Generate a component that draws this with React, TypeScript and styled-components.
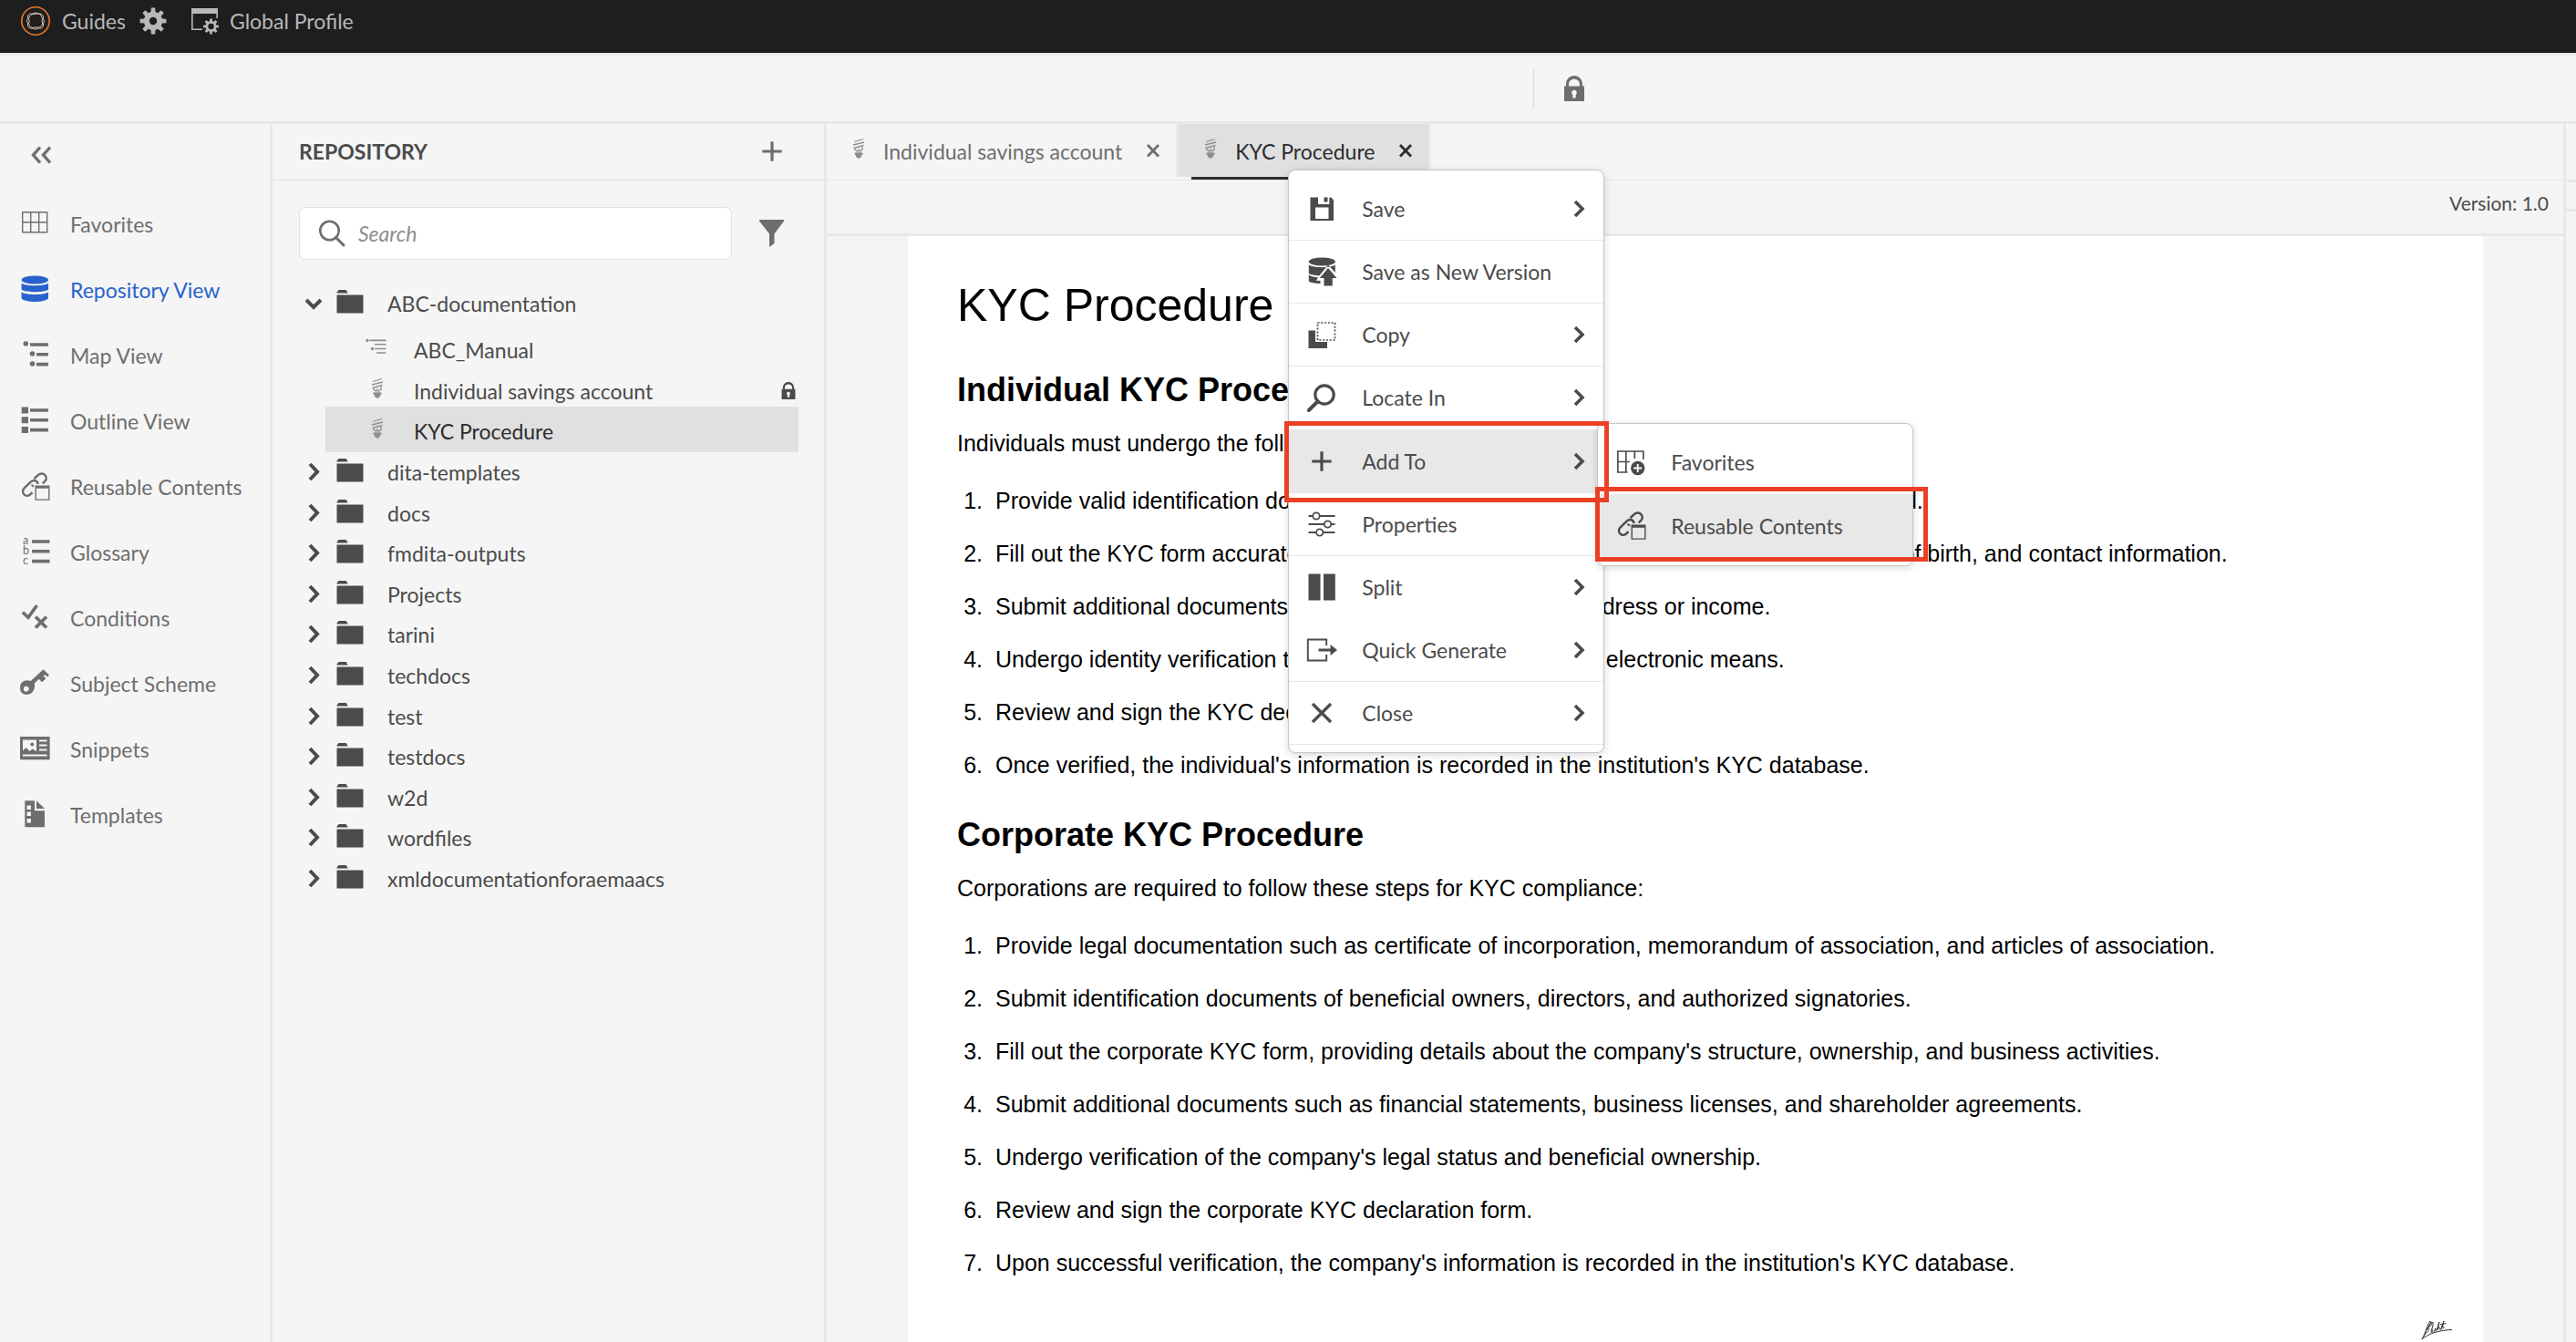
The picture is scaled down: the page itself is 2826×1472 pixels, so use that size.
import React from "react";
import styled, { createGlobalStyle, css } from "styled-components";

const line = "#e8e8e8";
const ink = "#4b4b4b";
const muted = "#6e6e6e";
const accent = "#2962cc";
const callout = "#eb4025";

const GlobalStyle = createGlobalStyle`
  *, *::before, *::after { box-sizing: border-box; }
  html, body, #root { height: 100%; }
  body {
    margin: 0;
    overflow: hidden;
    background: #f5f5f5;
    color: ${ink};
    font-family: Lato, "Open Sans", sans-serif;
    font-size: 23px;
    line-height: 30px;
  }
  button, input { font: inherit; color: inherit; }
  button { padding: 0; border: 0; background: none; text-align: left; cursor: pointer; }
  ul { margin: 0; padding: 0; list-style: none; }
  svg { display: block; flex: none; overflow: visible; }
`;

const Shell = styled.div`
  display: flex;
  flex-direction: column;
  height: 100vh;
`;

const Header = styled.header`
  display: flex;
  align-items: center;
  height: 58px;
  padding: 0 22px 12px;
  background: #1e1e1e;
  color: #b8b8b8;
`;

const Brand = styled.a`
  display: flex;
  align-items: center;
  gap: 12px;
  color: inherit;
  text-decoration: none;
`;

const HeaderButton = styled.button<{ $gap: number }>`
  display: flex;
  align-items: center;
  gap: 10px;
  margin-left: ${(p) => p.$gap}px;
`;

const Toolbar = styled.div`
  display: flex;
  align-items: center;
  height: 78px;
  border-top: 3px solid ${line};
  border-bottom: 3px solid ${line};
  background: #f5f5f5;
`;

const ToolbarMain = styled.div`
  flex: 0 0 59.5%;
`;

const ToolbarGroup = styled.div`
  display: flex;
  align-items: center;
  height: 44px;
  padding-left: 28px;
  border-left: 3px solid ${line};
  color: ${muted};
`;

const Workspace = styled.div`
  display: flex;
  flex: 1;
  min-height: 0;
`;

const Sidebar = styled.nav`
  display: flex;
  flex-direction: column;
  flex: none;
  width: 299px;
  border-right: 3px solid ${line};
  color: ${muted};
`;

const CollapseButton = styled.button`
  display: flex;
  align-items: center;
  height: 74px;
  padding: 4px 0 10px 32px;
`;

const NavItem = styled.a<{ $active?: boolean }>`
  display: flex;
  align-items: center;
  gap: 21px;
  height: 72px;
  padding-left: 20px;
  color: ${(p) => (p.$active ? accent : muted)};
  text-decoration: none;
  white-space: nowrap;
`;

const Panel = styled.section`
  flex: none;
  width: 608px;
  border-right: 3px solid ${line};
`;

const PanelHeader = styled.div`
  display: flex;
  align-items: center;
  justify-content: space-between;
  height: 62px;
  padding: 0 46px 2px 29px;
  border-bottom: 1px solid #e0e0e0;
`;

const PanelTitle = styled.h2`
  margin: 0;
  font-size: 23px;
  line-height: 30px;
  font-weight: 700;
`;

const IconButton = styled.button`
  color: ${muted};
`;

const SearchRow = styled.form`
  display: flex;
  align-items: center;
  gap: 30px;
  padding: 29px 44px 22px 29px;
`;

const SearchBox = styled.label`
  display: flex;
  align-items: center;
  flex: 1;
  height: 58px;
  padding: 0 20px;
  gap: 14px;
  border: 1px solid #e1e1e1;
  border-radius: 7px;
  background: #fff;
  color: ${muted};
`;

const SearchInput = styled.input`
  flex: 1;
  min-width: 0;
  padding: 0;
  border: 0;
  outline: 0;
  background: transparent;
  &::placeholder { color: #8e8e8e; font-style: italic; opacity: 1; }
`;

const folderRow = css`
  display: flex;
  align-items: center;
  width: 100%;
  padding-left: 32px;
`;

const OpenFolder = styled.button`
  ${folderRow}
  height: 51px;
`;

const FolderButton = styled.button`
  ${folderRow}
  height: 100%;
`;

const FolderIconWrap = styled.span`
  margin: 0 26px 0 12px;
`;

const Children = styled.ul`
  margin: 3px 28px 0 58px;
`;

const FileButton = styled.button<{ $selected?: boolean }>`
  display: flex;
  align-items: center;
  gap: 23px;
  width: 100%;
  height: 45px;
  padding: 0 3px 0 38px;
  ${(p) =>
    p.$selected &&
    css`
      height: 50px;
      margin-top: -5px;
      padding-top: 4px;
      background: #e0e0e0;
      color: #2c2c2c;
    `}
`;

const FileLock = styled.span`
  margin-left: auto;
`;

const FolderList = styled.ul`
  display: grid;
  grid-auto-rows: 1fr;
  height: 490px;
`;

const Editor = styled.main`
  display: flex;
  flex: 1;
  flex-direction: column;
  min-width: 0;
  background: #f4f4f4;
`;

const TabBar = styled.div`
  display: flex;
  height: 62px;
  border-bottom: 1px solid ${line};
  background: #f5f5f5;
`;

const TabSlot = styled.div<{ $active?: boolean }>`
  position: relative;
  display: flex;
  height: ${(p) => (p.$active ? 61 : 58)}px;
  border-right: 3px solid ${line};
  color: ${muted};
  ${(p) =>
    p.$active &&
    css`
      background: linear-gradient(#e0e0e0 58px, #f5f5f5 58px);
      border-right-color: #ebebeb;
      color: #2c2c2c;
      &::after {
        content: "";
        position: absolute;
        left: 14px;
        right: 10px;
        bottom: 0;
        height: 3px;
        background: #2c2c2c;
      }
    `}
`;

const Tab = styled.button`
  display: flex;
  align-items: center;
  height: 60px;
  gap: 8px;
  padding-left: 28px;
  white-space: nowrap;
`;

const TabClose = styled.button`
  height: 58px;
  padding: 0 17px 0 26px;
`;

const VersionBar = styled.div`
  height: 61px;
  flex: none;
  padding: 10px 16px 0;
  border-bottom: 3px solid ${line};
  color: ${ink};
  font-size: 21px;
  text-align: right;
`;

const Page = styled.article`
  flex: 1;
  min-height: 0;
  margin: 0 88px 0 89px;
  padding: 46px 54px 0;
  overflow: hidden;
  background: #fff;
  color: #000;
  font-family: "Liberation Sans", Arial, sans-serif;
  font-size: 25px;
  line-height: 30px;
`;

const PageTitle = styled.h1`
  margin: 0 0 41px;
  font-size: 50px;
  line-height: 60px;
  font-weight: 400;
`;

const SectionTitle = styled.h2`
  margin: 0 0 21px;
  font-size: 36px;
  line-height: 44px;
  font-weight: 700;
`;

const Intro = styled.p`
  margin: 0 0 19px;
`;

const Steps = styled.ol`
  margin: 0 0 26px;
  padding-left: 35px;
`;

const Step = styled.li`
  padding-left: 7px;
  line-height: 58px;
  white-space: nowrap;
`;

const Signature = styled.div`
  display: flex;
  justify-content: flex-end;
  margin-right: -22px;
  margin-top: 34px;
`;

const RightRail = styled.aside`
  flex: none;
  width: 14px;
  border-left: 3px solid ${line};
`;

const RailSlot = styled.div<{ $height: number }>`
  height: ${(p) => p.$height}px;
  border-bottom: 3px solid ${line};
`;

const MenuBox = styled.ul<{ $left: number; $top: number }>`
  position: absolute;
  left: ${(p) => p.$left}px;
  top: ${(p) => p.$top}px;
  z-index: 2;
  width: 347px;
  padding: 8px 0;
  border: 1px solid #c6c6c6;
  border-radius: 8px;
  background: #fff;
  box-shadow: 0 2px 8px rgba(0, 0, 0, 0.16);
  color: ${ink};
`;

const MenuRow = styled.li`
  position: relative;
`;

const MenuButton = styled.button<{ $rule?: boolean; $active?: boolean }>`
  display: flex;
  align-items: center;
  gap: 26px;
  width: 100%;
  height: ${(p) => (p.$active ? 70 : 69)}px;
  padding: 0 18px;
  border-bottom: 1px solid ${(p) => (p.$rule ? "#e6e6e6" : "transparent")};
  background: ${(p) => (p.$active ? "#e8e8e8" : "transparent")};
  white-space: nowrap;
`;

const MenuLabel = styled.span`
  flex: 1;
`;

const Callout = styled.span<{ $l: number; $t: number; $w: number; $h: number }>`
  position: absolute;
  z-index: 4;
  left: ${(p) => p.$l}px;
  top: ${(p) => p.$t}px;
  width: ${(p) => p.$w}px;
  height: ${(p) => p.$h}px;
  border: 5px solid ${callout};
  pointer-events: none;
`;

const Icon = ({ children, w = 36, h = 36 }: { children: React.ReactNode; w?: number; h?: number }) => (
  <svg width={w} height={h} viewBox={`0 0 ${w} ${h}`} fill="currentColor" aria-hidden="true">
    {children}
  </svg>
);

const gearPath = (cx: number, cy: number, outer: number, inner: number, hole: number) => {
  const pts: string[] = [];
  for (let i = 0; i < 8; i++) {
    const a = (i * Math.PI) / 4;
    const spec: [number, number][] = [
      [-0.24, inner],
      [-0.15, outer],
      [0.15, outer],
      [0.24, inner],
    ];
    spec.forEach(([d, r]) => pts.push(`${(cx + r * Math.sin(a + d)).toFixed(2)} ${(cy - r * Math.cos(a + d)).toFixed(2)}`));
  }
  return `M${pts.join("L")}ZM${cx - hole} ${cy}a${hole} ${hole} 0 1 0 ${hole * 2} 0a${hole} ${hole} 0 1 0 ${-hole * 2} 0Z`;
};

const Logo = () => (
  <Icon w={34} h={34}>
    <circle cx="17" cy="17" r="15.2" fill="none" stroke="#e87a2d" strokeWidth="1.6" />
    <g fill="none" stroke="#f3d9c4" strokeWidth="0.9">
      <path d="M17 8c2 0 2.500 1.500 4.500 1.200s4.500 1.800 4 4.300.9 2 .9 3.500-1.300 2-.9 4-1.500 4.500-4 4-2.500 1-4.500 1-2.500-1.300-4.500-1-4.500-1.500-4-4-.9-2-.9-4 1.300-2 .9-4 1.500-4.500 4-4 2.500-1 4.500-1Z" />
      <path d="M17 9.500c3-1.300 5.500-.5 6 1.500s2.500 3 1 6c1.500 3 0 5.500-1.300 6s-3 2-5.700.7c-2.700 1.300-4.500.8-5.700-.7s-2.500-3-1-6c-1.500-3-.2-5 1-6s3.200-2 5.700-1.500Z" />
    </g>
  </Icon>
);

const Gear = () => (
  <Icon w={30} h={30}>
    <path fillRule="evenodd" d={gearPath(15, 15, 14.6, 10.2, 4.2)} />
  </Icon>
);

const ProfileIcon = () => (
  <Icon w={34} h={34}>
    <path d="M2 3h29v6H2z" />
    <path d="M2.800 8v18.200H14M30.200 8v6" fill="none" stroke="currentColor" strokeWidth="1.6" />
    <path fillRule="evenodd" d={gearPath(23.5, 23, 8.6, 6, 3.2)} />
  </Icon>
);

const GridIcon = () => (
  <Icon>
    <path d="M4.700 4.700h27v22h-27zM13.700 4.700v22M22.700 4.700v22M4.700 15.700h27" fill="none" stroke="currentColor" strokeWidth="1.4" />
  </Icon>
);

const DatabaseIcon = () => (
  <Icon>
    <ellipse cx="18.300" cy="7" rx="14.700" ry="4.600" />
    <path d="M3.600 10.500c4 3.700 25.400 3.700 29.400 0v7c-4 3.700-25.400 3.700-29.400 0zM3.600 20.300c4 3.700 25.400 3.700 29.400 0v7.200c-4 4.600-25.400 4.600-29.400 0z" />
  </Icon>
);

const MapIcon = () => (
  <Icon>
    <circle cx="8.300" cy="5" r="2.800" />
    <circle cx="15.500" cy="16" r="2.800" />
    <circle cx="15.500" cy="27" r="2.800" />
    <path d="M13 4.200h20v3.600H13zM20 15h13v3.600H20zM20 25.800h13v3.600H20z" />
  </Icon>
);

const OutlineIcon = () => (
  <Icon>
    <path d="M3.700 2.400h7.300v7H3.700zM3.700 13.200h7.300v7H3.700zM3.700 24h7.300v7H3.700zM13 4.200h20v3.600H13zM13 15h20v3.600H13zM13 25.800h20v3.600H13z" />
  </Icon>
);

const ReuseIcon = () => (
  <Icon>
    <g fill="none" stroke="currentColor" strokeLinecap="butt">
      <path d="M17.500 9.200l4.200-4.100c2.500-2.400 5.800-2 7.500-.2 2.100 2.200 1.900 5.200-.2 7.300l-2.300 2.200" strokeWidth="2.500" />
      <path d="M21.500 15c-.3-3.600-4.400-5.600-7.600-2.600l-7 6.800c-2.500 2.500-2.200 5.400-.5 7.200 1.900 1.900 5 1.900 7.100-.2l2-2" strokeWidth="2.500" />
      <path d="M14.500 15.800l2.500 2" strokeWidth="2" />
    </g>
    <path fillRule="evenodd" d="M18.500 16.500h16v16.300h-16zM19.900 19.800v11.600h13.200V19.800z" />
  </Icon>
);

const GlossaryIcon = () => (
  <Icon>
    <g fontFamily="Lato, sans-serif" fontSize="12.500">
      <text x="5" y="9">a</text>
      <text x="5" y="20">b</text>
      <text x="5" y="30.500">c</text>
    </g>
    <path d="M15 4.200h19.500v3.600H15zM15 15h19.500v3.600H15zM15 25.800h19.500v3.600H15z" />
  </Icon>
);

const ConditionsIcon = () => (
  <Icon>
    <path d="M4.800 11.500l6.200 5.800L20.500 4M19 16.500l12 12M31 16.500l-12 12" fill="none" stroke="currentColor" strokeWidth="3.600" />
  </Icon>
);

const KeyIcon = () => (
  <Icon>
    <path fillRule="evenodd" d="M10 14.200c1.500 0 2.600.3 3.700.9L27.500 2.200l6.500 6.300-2 2-2.600-2.600-1.700 1.700 2.600 2.600-4.200 4-3.500-3.400-5 5c1.900 5.500-2.200 12-7.600 12S2 27.500 2 22.200s3.600-8 8-8Zm-1.300 6.500a2.900 2.900 0 1 0 .1 5.800 2.900 2.900 0 0 0-.1-5.800Z" />
  </Icon>
);

const SnippetIcon = () => (
  <Icon>
    <path fillRule="evenodd" d="M2 4h32.600v25.300H2zM5 7.500v12l3.500-3.500 4 4 3-2.500 4.500 2.500V7.500zM23 7.500v2h8.500v-2zM23 12.500v2h8.500v-2zM23 17.500v2h8.500v-2zM5 23.500v2h26.500v-2z" />
    <circle cx="15.300" cy="12.500" r="1.900" />
  </Icon>
);

const TemplateIcon = () => (
  <Icon>
    <path fillRule="evenodd" d="M7.300 2.200H18v11h11v18H7.300zM9.500 7.500v4.500h4.500V7.500zM9.500 14.500V19h4.500v-4.500zM9.500 22v4.500h4.500V22z" />
    <path d="M20 2.200l9 8.800h-9z" />
  </Icon>
);

const Chevron = ({ down = false }: { down?: boolean }) => (
  <Icon w={26} h={26}>
    <path d={down ? "M5 9l8 8 8-8" : "M9 4l8 8.500-8 8.500"} fill="none" stroke="currentColor" strokeWidth="4" />
  </Icon>
);

const MenuChevron = () => (
  <Icon w={16} h={24}>
    <path d="M3 4l8 8-8 8" fill="none" stroke="currentColor" strokeWidth="3.600" />
  </Icon>
);

const FolderIcon = () => (
  <Icon w={30} h={36}>
    <path d="M.5 5.500L2.500 3h8.200l2 3.500H.5zM.5 8.500h29v20H.5z" />
  </Icon>
);

const ManualIcon = () => (
  <Icon>
    <g fill="#8e8e8e">
      <circle cx="8" cy="7.500" r="1.700" />
      <path d="M10.500 6.500h18v1.800h-18zM16 11h12.500v1.600H16zM16 15.700h12.500v1.600H16zM18 20.200h10.500v1.600H18z" />
      <circle cx="13.500" cy="16.500" r="1.700" />
    </g>
  </Icon>
);

const BulbIcon = ({ w = 36 }: { w?: number }) => (
  <svg width={w} height="36" viewBox={w === 36 ? "0 0 36 36" : `12 0 ${w} 36`} aria-hidden="true">
    <g fill="none" stroke="#8e8e8e">
      <path d="M14 7.500l10-3M13 11l12-3M13.500 14.500l11-3M15 13.500v3l2.500 1v3M23 13v3.500l-2.500 1v3M19 15v3" strokeWidth="1.300" />
    </g>
    <path d="M14.500 19.500h9v2l-1.500 1v1.500L19 26l-3-2v-1.500l-1.500-1z" fill="#8e8e8e" />
  </svg>
);

const LockIcon = ({ w, h }: { w: number; h: number }) => (
  <svg width={w} height={h} viewBox="0 0 22 28" fill="currentColor" aria-hidden="true">
    <path fillRule="evenodd" d="M0 11.500h2V9c0-5 4-9 9-9s9 4 9 9v2.500h2V28H0zm5 0h12V9.500c0-3.500-2.600-5.800-6-5.800S5 6 5 9.500zm6 4.200a2.900 2.900 0 0 0-1.700 5.200V24.500h3.400v-3.600A2.900 2.900 0 0 0 11 15.700z" />
  </svg>
);

const CrossIcon = () => (
  <Icon w={16} h={18}>
    <path d="M2 3l12 12.500M14 3L2 15.500" fill="none" stroke="currentColor" strokeWidth="2.800" />
  </Icon>
);

const SaveIcon = () => (
  <Icon>
    <path fillRule="evenodd" d="M5.500 5.500H14v7.500h14V5.700l3 3V31H5.500zM11 16.500V29h14.500V16.500z" />
    <path d="M20.500 5.500h4v5h-4zM26.300 5.500h1.700l2.500 2.500v5.500h-4.200z" />
  </Icon>
);

const SaveVersionIcon = () => (
  <Icon>
    <ellipse cx="18.300" cy="7" rx="14.500" ry="4.600" />
    <path d="M3.800 10.500c4 3.500 25 3.500 29 0V19l-7.800-8.500-9.500 11.700c-5 0-9.800-.9-11.700-2.200zM3.800 21.500c2.800 2 6 2.600 10.200 2.700l-2 3.500 4.500.3v3c-6 0-11-1-12.700-2.500z" />
    <path d="M25 14l9.500 11h-4.700v8.500h-9.300V25h-4.700z" />
  </Icon>
);

const CopyIcon = () => (
  <Icon>
    <path d="M3.500 13.500h7.500V26h13v7H3.500z" />
    <path d="M13.500 5h19v19h-19z" fill="none" stroke="currentColor" strokeWidth="1.700" strokeDasharray="2 1.800" />
  </Icon>
);

const LocateIcon = () => (
  <Icon>
    <circle cx="21" cy="15" r="10.200" fill="none" stroke="currentColor" strokeWidth="3.200" />
    <path d="M13.500 22.500L3.800 32" stroke="currentColor" strokeWidth="4" strokeLinecap="round" />
  </Icon>
);

const PlusIcon = ({ w = 36 }: { w?: number }) => (
  <svg width={w} height={w} viewBox={w === 36 ? "0 0 36 36" : "7 7 22 22"} aria-hidden="true">
    <path d="M18 7.300v21.400M7.300 18h21.400" stroke="currentColor" strokeWidth="3.200" />
  </svg>
);

const SlidersIcon = () => (
  <Icon>
    <g fill="none" stroke="currentColor" strokeWidth="1.800">
      <path d="M3.500 9H8M16 9h16.500M3.500 18H20M28.500 18h4M3.500 27H11.500M20 27h12.500" />
      <circle cx="12" cy="9" r="3.700" />
      <circle cx="24.500" cy="18" r="3.700" />
      <circle cx="15.700" cy="27" r="3.700" />
    </g>
  </Icon>
);

const SplitIcon = () => (
  <Icon>
    <path d="M3.500 3.500h13v29h-13zM20 3.500h12.800v29H20z" />
  </Icon>
);

const GenerateIcon = () => (
  <Icon>
    <path d="M23.200 13V6.500H2.800v23h20.400V23" fill="none" stroke="currentColor" strokeWidth="1.900" />
    <path d="M14.500 16.500h13V12l7.500 6-7.500 6v-4.500h-13z" />
  </Icon>
);

const CloseIcon = () => (
  <Icon>
    <path d="M8 8l20 20M28 8L8 28" stroke="currentColor" strokeWidth="3.200" />
  </Icon>
);

const GridAddIcon = () => (
  <Icon>
    <path d="M14.500 29H3.800V6h28v9M12.800 6v23M22.300 6v8M3.800 17.500h13" fill="none" stroke="currentColor" strokeWidth="1.700" />
    <circle cx="25.700" cy="24.500" r="7.700" />
    <path d="M25.700 20v9M21.200 24.500h9" stroke="#fff" strokeWidth="1.800" />
  </Icon>
);

const SearchIcon = () => (
  <Icon w={30} h={30}>
    <circle cx="12.500" cy="12" r="10.200" fill="none" stroke="currentColor" strokeWidth="2.600" />
    <path d="M19.500 19.500l8.500 8.500" stroke="currentColor" strokeWidth="3" strokeLinecap="round" />
  </Icon>
);

const FunnelIcon = () => (
  <Icon w={27} h={30}>
    <path d="M0 0h27v1.500L16.500 15.500v10.500L11 30V15.500L0 1.500z" />
  </Icon>
);

const CollapseIcon = () => (
  <Icon w={26} h={20}>
    <path d="M12 1.500L4.500 10l7.500 8.500M23 1.500L15.500 10l7.500 8.500" fill="none" stroke="currentColor" strokeWidth="3.400" />
  </Icon>
);

const SignatureMark = () => (
  <svg width="36" height="24" viewBox="0 0 36 24" fill="none" stroke="#333" strokeWidth="1" role="img" aria-label="Signature">
    <path d="M1 21C9 14 21 11 34 10.500M3 18C6 10 8 3 10 1c2 1-2 7-5 11M4 15c2-4 5-10 8-13 1 2-3 6-5 7 3 0 2 4-3 6M11 14c0-4 3-8 2-12M13 10c-1 3 0 5 1.500 2.500L16 9c-1 3 0 4 1.500 2L20 2l-2.500 9 2-4c1 1-.5 3 2 3.500L25 1l-2.500 9M20.500 5l7-1.500M23 8c1-2 3-1 1.500 1.500M1 21l3-6" />
  </svg>
);

const navItems = [
  { label: "Favorites", icon: <GridIcon /> },
  { label: "Repository View", icon: <DatabaseIcon />, active: true },
  { label: "Map View", icon: <MapIcon /> },
  { label: "Outline View", icon: <OutlineIcon /> },
  { label: "Reusable Contents", icon: <ReuseIcon /> },
  { label: "Glossary", icon: <GlossaryIcon /> },
  { label: "Conditions", icon: <ConditionsIcon /> },
  { label: "Subject Scheme", icon: <KeyIcon /> },
  { label: "Snippets", icon: <SnippetIcon /> },
  { label: "Templates", icon: <TemplateIcon /> },
];

const folders = [
  "dita-templates",
  "docs",
  "fmdita-outputs",
  "Projects",
  "tarini",
  "techdocs",
  "test",
  "testdocs",
  "w2d",
  "wordfiles",
  "xmldocumentationforaemaacs",
];

const individualSteps = [
  "Provide valid identification documents such as passport, driver's license, or national ID card.",
  "Fill out the KYC form accurately, providing personal details including name, address, date of birth, and contact information.",
  "Submit additional documents if required, such as proof of address or income.",
  "Undergo identity verification through biometric, in-person, or electronic means.",
  "Review and sign the KYC declaration form.",
  "Once verified, the individual's information is recorded in the institution's KYC database.",
];

const corporateSteps = [
  "Provide legal documentation such as certificate of incorporation, memorandum of association, and articles of association.",
  "Submit identification documents of beneficial owners, directors, and authorized signatories.",
  "Fill out the corporate KYC form, providing details about the company's structure, ownership, and business activities.",
  "Submit additional documents such as financial statements, business licenses, and shareholder agreements.",
  "Undergo verification of the company's legal status and beneficial ownership.",
  "Review and sign the corporate KYC declaration form.",
  "Upon successful verification, the company's information is recorded in the institution's KYC database.",
];

type Entry = { label: string; icon: React.ReactNode; more?: boolean; rule?: boolean; active?: boolean };

const menuEntries: Entry[] = [
  { label: "Save", icon: <SaveIcon />, more: true, rule: true },
  { label: "Save as New Version", icon: <SaveVersionIcon />, rule: true },
  { label: "Copy", icon: <CopyIcon />, more: true, rule: true },
  { label: "Locate In", icon: <LocateIcon />, more: true },
  { label: "Add To", icon: <PlusIcon />, more: true, active: true },
  { label: "Properties", icon: <SlidersIcon />, rule: true },
  { label: "Split", icon: <SplitIcon />, more: true },
  { label: "Quick Generate", icon: <GenerateIcon />, more: true, rule: true },
  { label: "Close", icon: <CloseIcon />, more: true, rule: true },
];

const MenuEntry = ({ entry, children }: { entry: Entry; children?: React.ReactNode }) => (
  <MenuRow role="none">
    <MenuButton role="menuitem" $rule={entry.rule} $active={entry.active}>
      {entry.icon}
      <MenuLabel>{entry.label}</MenuLabel>
      {entry.more && <MenuChevron />}
    </MenuButton>
    {children}
  </MenuRow>
);

const ContextMenu = () => (
  <MenuBox role="menu" aria-label="Tab options" $left={120} $top={50}>
    {menuEntries.map((entry) => (
      <MenuEntry key={entry.label} entry={entry}>
        {entry.active && (
          <>
            <MenuBox role="menu" aria-label="Add to" $left={338} $top={-7}>
              <MenuEntry entry={{ label: "Favorites", icon: <GridAddIcon /> }} />
              <MenuEntry entry={{ label: "Reusable Contents", icon: <ReuseIcon />, active: true }} />
            </MenuBox>
            <Callout $l={-5} $t={-9} $w={356} $h={89} />
            <Callout $l={336} $t={63} $w={365} $h={82} />
          </>
        )}
      </MenuEntry>
    ))}
  </MenuBox>
);

export default function App() {
  return (
    <Shell>
      <GlobalStyle />
      <Header>
        <Brand href="#">
          <Logo />
          Guides
        </Brand>
        <HeaderButton $gap={15} aria-label="Settings">
          <Gear />
        </HeaderButton>
        <HeaderButton $gap={25}>
          <ProfileIcon />
          Global Profile
        </HeaderButton>
      </Header>
      <Toolbar>
        <ToolbarMain />
        <ToolbarGroup>
          <IconButton aria-label="Lock">
            <LockIcon w={30} h={28} />
          </IconButton>
        </ToolbarGroup>
      </Toolbar>
      <Workspace>
        <Sidebar>
          <CollapseButton aria-label="Collapse">
            <CollapseIcon />
          </CollapseButton>
          {navItems.map((item) => (
            <NavItem key={item.label} href="#" $active={item.active}>
              {item.icon}
              {item.label}
            </NavItem>
          ))}
        </Sidebar>
        <Panel>
          <PanelHeader>
            <PanelTitle>REPOSITORY</PanelTitle>
            <IconButton aria-label="Add">
              <PlusIcon w={22} />
            </IconButton>
          </PanelHeader>
          <SearchRow>
            <SearchBox>
              <SearchIcon />
              <SearchInput type="text" placeholder="Search" aria-label="Search" />
            </SearchBox>
            <IconButton type="button" aria-label="Filter">
              <FunnelIcon />
            </IconButton>
          </SearchRow>
          <OpenFolder>
            <Chevron down />
            <FolderIconWrap>
              <FolderIcon />
            </FolderIconWrap>
            ABC-documentation
          </OpenFolder>
          <Children>
            <li>
              <FileButton>
                <ManualIcon />
                ABC_Manual
              </FileButton>
            </li>
            <li>
              <FileButton>
                <BulbIcon />
                Individual savings account
                <FileLock>
                  <LockIcon w={16} h={19} />
                </FileLock>
              </FileButton>
            </li>
            <li>
              <FileButton $selected>
                <BulbIcon />
                KYC Procedure
              </FileButton>
            </li>
          </Children>
          <FolderList>
            {folders.map((name) => (
              <li key={name}>
                <FolderButton>
                  <Chevron />
                  <FolderIconWrap>
                    <FolderIcon />
                  </FolderIconWrap>
                  {name}
                </FolderButton>
              </li>
            ))}
          </FolderList>
        </Panel>
        <Editor>
          <TabBar>
            <TabSlot>
              <Tab>
                <BulbIcon w={26} />
                Individual savings account
              </Tab>
              <TabClose aria-label="Close Individual savings account">
                <CrossIcon />
              </TabClose>
            </TabSlot>
            <TabSlot $active>
              <Tab>
                <BulbIcon w={26} />
                KYC Procedure
              </Tab>
              <TabClose aria-label="Close KYC Procedure">
                <CrossIcon />
              </TabClose>
              <ContextMenu />
            </TabSlot>
          </TabBar>
          <VersionBar>Version: 1.0</VersionBar>
          <Page>
            <PageTitle>KYC Procedure</PageTitle>
            <SectionTitle>Individual KYC Procedure</SectionTitle>
            <Intro>Individuals must undergo the following steps for KYC compliance:</Intro>
            <Steps>
              {individualSteps.map((text) => (
                <Step key={text}>{text}</Step>
              ))}
            </Steps>
            <SectionTitle>Corporate KYC Procedure</SectionTitle>
            <Intro>Corporations are required to follow these steps for KYC compliance:</Intro>
            <Steps>
              {corporateSteps.map((text) => (
                <Step key={text}>{text}</Step>
              ))}
            </Steps>
            <Signature>
              <SignatureMark />
            </Signature>
          </Page>
        </Editor>
        <RightRail>
          <RailSlot $height={64} />
          <RailSlot $height={32} />
        </RightRail>
      </Workspace>
    </Shell>
  );
}
